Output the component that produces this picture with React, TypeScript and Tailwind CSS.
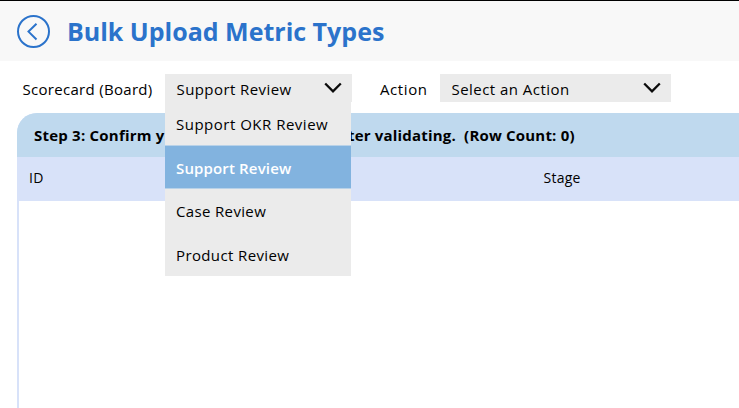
import { ReactNode } from "react";

function Label({ children, className }: { children: ReactNode; className: string }) {
  return <span className={`block whitespace-pre ${className}`}>{children}</span>;
}

function Chevron() {
  return (
    <svg width="18" height="12" viewBox="0 0 18 12" fill="none" stroke="#0b0b0b" strokeWidth="2.3">
      <path d="M1.2 1.5 L9 9.3 L16.8 1.5" />
    </svg>
  );
}

const options = [
  { label: "Support OKR Review", row: "h-[43px] pt-px tracking-[0.5px]" },
  { label: "Support Review", row: "h-11 border-y border-[#b9d2e8] bg-[#82b3df] pt-px font-semibold text-white tracking-[0.15px]" },
  { label: "Case Review", row: "h-11 tracking-[0.35px]" },
  { label: "Product Review", row: "h-[43px] pt-px tracking-[0.38px]" },
];

export default function App() {
  return (
    <div className="flex h-[408px] w-[739px] flex-col overflow-hidden bg-white font-['Open_Sans','Noto_Sans',sans-serif] text-[15px] leading-5 text-black">
      <header className="flex h-[61px] shrink-0 items-center border-t border-black bg-[#f8f8f8] pl-4">
        <button aria-label="Back" className="mt-px">
          <svg width="35" height="35" viewBox="0 0 35 35" fill="none" stroke="#2b73cb" strokeWidth="2">
            <circle cx="17.5" cy="17.5" r="15.5" />
            <path d="M20.5 9.7 L12.5 17.6 L20.5 25.5" />
          </svg>
        </button>
        <h1 className="ml-4 whitespace-pre text-[25px] font-bold leading-8 text-[#2b73cb]">Bulk Upload Metric Types</h1>
      </header>

      <div className="flex h-[52px] shrink-0 items-start pt-[13px]">
        <div className="w-[165px] pl-[22.5px] pt-[5px]">
          <Label className="tracking-[0.3px]">Scorecard (Board)</Label>
        </div>
        <div className="relative z-10 flex h-7 w-[187px] items-center justify-between bg-[#ebebeb] pl-[11.5px] pr-[10px]">
          <Label className="mt-px tracking-[0.42px]">Support Review</Label>
          <Chevron />
          <ul className="absolute left-0 top-7 w-[186px] bg-[#ebebeb]">
            {options.map((option) => (
              <li key={option.label} className={`flex items-center pl-[11px] ${option.row}`}>
                <Label className="">{option.label}</Label>
              </li>
            ))}
          </ul>
        </div>
        <div className="w-[88px] pl-7 pt-[5px]">
          <Label className="tracking-[0.6px]">Action</Label>
        </div>
        <div className="flex h-7 w-[231px] items-center justify-between bg-[#ebebeb] pl-[11.5px] pr-[10px]">
          <Label className="mt-px tracking-[0.46px]">Select an Action</Label>
          <Chevron />
        </div>
      </div>

      <main className="ml-[17px] flex flex-1 flex-col overflow-hidden rounded-tl-[20px] bg-[#d8e2f9]">
        <div className="flex h-11 shrink-0 items-center bg-[#bfd9ee] pl-[17px] font-bold">
          <span className="w-[314px] shrink-0 whitespace-pre tracking-[0.22px]">Step 3: Confirm y</span>
          <span className="whitespace-pre tracking-[0.19px]">ter validating.  (Row Count: 0)</span>
        </div>
        <div className="flex h-11 shrink-0 items-center pb-0.5 text-[14px]">
          <span className="w-[526.5px] pl-3 tracking-[0.3px]">ID</span>
          <span className="tracking-[0.25px]">Stage</span>
        </div>
        <div className="ml-0.5 flex-1 bg-white" />
      </main>
    </div>
  );
}
